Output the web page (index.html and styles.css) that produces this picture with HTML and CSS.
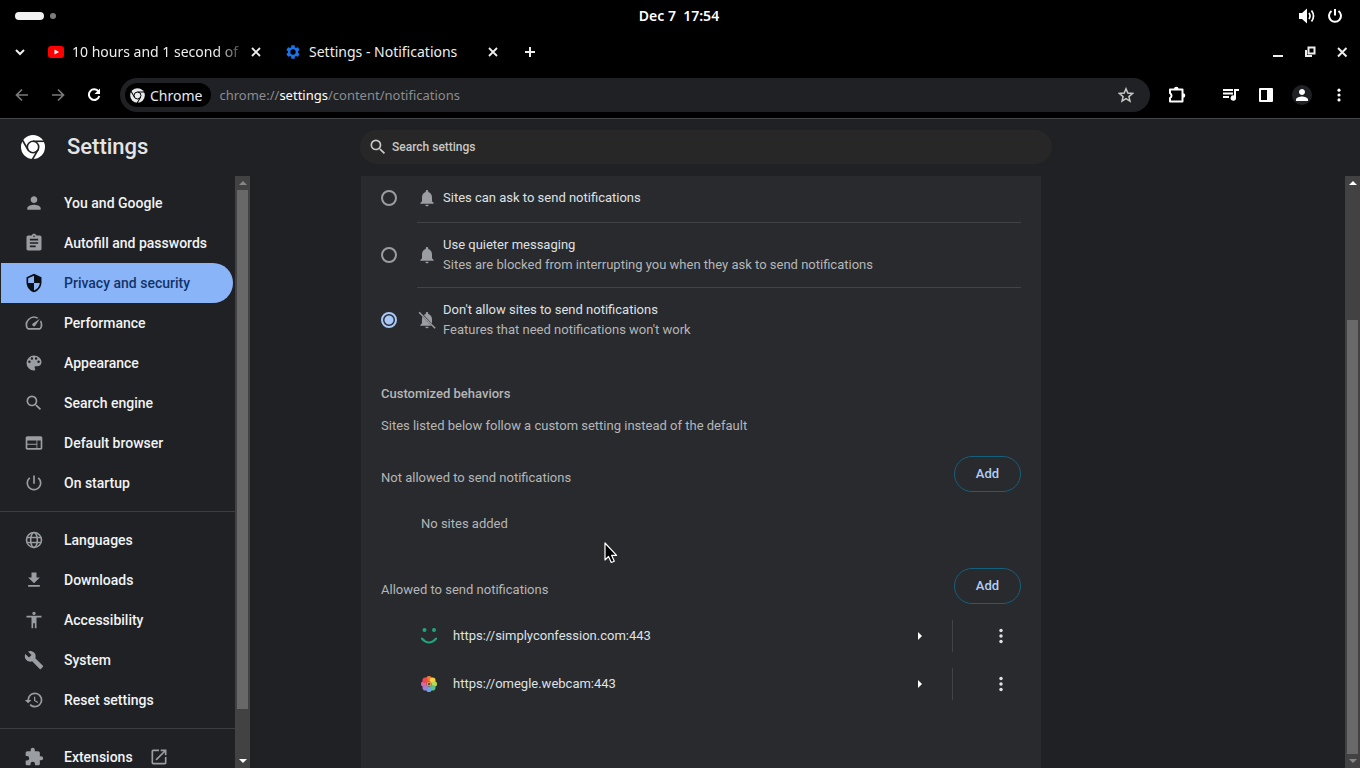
FILE: index.html
```
<!DOCTYPE html>
<html lang="en">
<head>
  <meta charset="UTF-8">
  <meta name="viewport" content="width=device-width, initial-scale=1.0">
  <title>Settings - Notifications</title>
  <link rel="stylesheet" href="styles.css">
</head>
<body>
  <!-- Icon set -->
  <svg class="sprite" aria-hidden="true">
    <mask id="chrome-gaps">
      <rect width="24" height="24" fill="#fff"/>
      <g fill="none" stroke="#000" stroke-width="1.4">
        <circle cx="12" cy="12" r="4.900"/>
        <path d="M12 7.100h11"/>
        <path d="M12 7.100h11" transform="rotate(120 12 12)"/>
        <path d="M12 7.100h11" transform="rotate(240 12 12)"/>
      </g>
    </mask>
    <symbol id="chrome" viewBox="0 0 24 24"><circle cx="12" cy="12" r="10.300" mask="url(#chrome-gaps)"/></symbol>
    <symbol id="close" viewBox="0 0 16 16"><path d="M4 4l8 8M12 4l-8 8" fill="none" stroke="currentColor" stroke-width="1.800"/></symbol>
    <symbol id="search" viewBox="0 0 24 24"><path d="M15.500 14h-.79l-.28-.27A6.470 6.470 0 0 0 16 9.500 6.500 6.500 0 1 0 9.500 16c1.610 0 3.090-.59 4.230-1.570l.27.28v.79l5 4.990L20.490 19l-4.990-5zm-6 0C7.010 14 5 11.990 5 9.500S7.010 5 9.500 5 14 7.010 14 9.500 11.990 14 9.500 14z"/></symbol>
    <symbol id="person" viewBox="0 0 24 24"><path d="M12 12c2.210 0 4-1.790 4-4s-1.790-4-4-4-4 1.790-4 4 1.790 4 4 4zm0 2c-2.670 0-8 1.340-8 4v2h16v-2c0-2.660-5.330-4-8-4z"/></symbol>
    <symbol id="clipboard" viewBox="0 0 24 24"><path d="M19 3h-4.180C14.400 1.840 13.300 1 12 1s-2.400.84-2.820 2H5c-1.100 0-2 .9-2 2v14c0 1.100.9 2 2 2h14c1.100 0 2-.9 2-2V5c0-1.100-.9-2-2-2zm-7 0c.55 0 1 .45 1 1s-.45 1-1 1-1-.45-1-1 .45-1 1-1zm2 14H7v-2h7v2zm3-4H7v-2h10v2zm0-4H7V7h10v2z"/></symbol>
    <symbol id="shield" viewBox="0 0 24 24"><path d="M12 1L3 5v6c0 5.550 3.840 10.740 9 12 5.160-1.260 9-6.450 9-12V5l-9-4zm0 10.990h7c-.53 4.120-3.280 7.790-7 8.940V12H5V6.300l7-3.110v8.800z"/></symbol>
    <symbol id="speed" viewBox="0 0 24 24"><path d="M20.380 8.570l-1.230 1.850a8 8 0 0 1-.22 7.580H5.070A8 8 0 0 1 15.580 6.850l1.850-1.230A10 10 0 0 0 3.350 19a2 2 0 0 0 1.720 1h13.850a2 2 0 0 0 1.740-1 10 10 0 0 0-.27-10.440zm-9.790 6.840a2 2 0 0 0 2.830 0l5.660-8.490-8.490 5.660a2 2 0 0 0 0 2.830z"/></symbol>
    <symbol id="palette" viewBox="0 0 24 24"><path d="M12 3a9 9 0 0 0 0 18c.83 0 1.500-.67 1.500-1.500 0-.39-.15-.74-.39-1.010-.23-.26-.38-.61-.38-.99 0-.83.67-1.500 1.500-1.500H16c2.760 0 5-2.240 5-5 0-4.420-4.030-8-9-8zm-5.500 9a1.500 1.500 0 1 1 0-3 1.500 1.500 0 0 1 0 3zm3-4a1.500 1.500 0 1 1 0-3 1.500 1.500 0 0 1 0 3zm5 0a1.500 1.500 0 1 1 0-3 1.500 1.500 0 0 1 0 3zm3 4a1.500 1.500 0 1 1 0-3 1.500 1.500 0 0 1 0 3z"/></symbol>
    <symbol id="browser" viewBox="0 0 24 24"><path d="M20 4H4c-1.100 0-2 .9-2 2v12c0 1.100.9 2 2 2h16c1.100 0 2-.9 2-2V6c0-1.100-.9-2-2-2zm-5 14H4v-4h11v4zm0-5H4V9h11v4zm5 5h-4V9h4v9z"/></symbol>
    <symbol id="power" viewBox="0 0 24 24"><path d="M13 3h-2v10h2V3zm4.830 2.170l-1.420 1.420A6.920 6.920 0 0 1 19 12a7 7 0 1 1-11.410-5.420L6.170 5.170A9 9 0 1 0 21 12a8.940 8.940 0 0 0-3.170-6.830z"/></symbol>
    <symbol id="globe" viewBox="0 0 24 24"><g fill="none" stroke="currentColor" stroke-width="1.900"><circle cx="12" cy="12" r="9"/><ellipse cx="12" cy="12" rx="4" ry="9"/><path d="M4 9h16M4 15h16"/></g></symbol>
    <symbol id="download" viewBox="0 0 24 24"><path d="M19 9h-4V3H9v6H5l7 7 7-7zM5 18v2h14v-2H5z"/></symbol>
    <symbol id="accessibility" viewBox="0 0 24 24"><path d="M12 2c1.100 0 2 .9 2 2s-.9 2-2 2-2-.9-2-2 .9-2 2-2zm9 7h-6v13h-2v-6h-2v6H9V9H3V7h18v2z"/></symbol>
    <symbol id="wrench" viewBox="0 0 24 24"><path d="M22.700 19l-9.100-9.100c.9-2.300.4-5-1.500-6.900-2-2-5-2.400-7.400-1.300L9 6 6 9 1.600 4.700C.4 7.100.9 10.100 2.900 12.100c1.900 1.900 4.600 2.400 6.900 1.500l9.100 9.100c.4.4 1 .4 1.400 0l2.300-2.300c.5-.4.5-1.100.1-1.400z"/></symbol>
    <symbol id="restore" viewBox="0 0 24 24"><path d="M13 3a9 9 0 0 0-9 9H1l3.890 3.890.07.14L9 12H6a7 7 0 1 1 2.060 4.940l-1.420 1.420A9 9 0 1 0 13 3zm-1 5v5l4.280 2.540.72-1.210-3.500-2.080V8H12z"/></symbol>
    <symbol id="extension" viewBox="0 0 24 24"><path d="M20.500 11H19V7c0-1.100-.9-2-2-2h-4V3.500a2.500 2.500 0 0 0-5 0V5H4c-1.100 0-2 .9-2 2v3.800h1.500a2.700 2.700 0 0 1 0 5.400H2V20c0 1.100.9 2 2 2h3.800v-1.500a2.700 2.700 0 0 1 5.400 0V22H17c1.100 0 2-.9 2-2v-4h1.500a2.500 2.500 0 0 0 0-5z"/></symbol>
    <symbol id="external" viewBox="0 0 24 24"><path d="M19 19H5V5h7V3H5a2 2 0 0 0-2 2v14a2 2 0 0 0 2 2h14c1.100 0 2-.9 2-2v-7h-2v7zM14 3v2h3.590l-9.830 9.830 1.410 1.410L19 6.410V10h2V3h-7z"/></symbol>
    <symbol id="bell" viewBox="0 0 24 24"><path d="M12 22c1.100 0 2-.9 2-2h-4a2 2 0 0 0 2 2zm6-6v-5c0-3.070-1.640-5.640-4.500-6.320V4a1.500 1.500 0 0 0-3 0v.68C7.630 5.360 6 7.920 6 11v5l-2 2v1h16v-1l-2-2z"/></symbol>
    <symbol id="bell-off" viewBox="0 0 24 24"><path d="M12 22a2 2 0 0 0 2-2h-4a2 2 0 0 0 2 2zM6.600 8.200A7.200 7.200 0 0 0 6 11v5l-2 2v1h13.400zM18 16.300V11c0-3.080-1.640-5.640-4.500-6.320V4a1.500 1.500 0 0 0-3 0v.68c-.9.220-1.700.62-2.350 1.170z"/><path d="M2.500 2.700L21.800 22" stroke="currentColor" stroke-width="1.800"/></symbol>
    <symbol id="dots" viewBox="0 0 24 24"><circle cx="12" cy="5.500" r="2.100"/><circle cx="12" cy="12" r="2.100"/><circle cx="12" cy="18.500" r="2.100"/></symbol>
  </svg>

  <header class="desktop-bar">
    <div class="workspaces"><span class="workspace current"></span><span class="workspace"></span></div>
    <time class="clock">Dec 7&nbsp; 17:54</time>
    <div class="status">
      <svg width="18" height="18" viewBox="0 0 18 18"><path d="M1 6h3l5-4.500v15L4 12H1z"/><path d="M11 6q2 3 0 6M13.500 3.500q4 5.500 0 11" fill="none" stroke="currentColor" stroke-width="1.700"/></svg>
      <svg width="16" height="16" viewBox="0 0 16 16"><path d="M4.500 3a6 6 0 1 0 7 0M8 1v6.500" fill="none" stroke="currentColor" stroke-width="2"/></svg>
    </div>
  </header>

  <div class="tab-strip">
    <button class="icon-button tab-search" aria-label="Search tabs"><svg width="16" height="16" viewBox="0 0 16 16"><path d="M4 6l4 4 4-4" fill="none" stroke="currentColor" stroke-width="2"/></svg></button>
    <div class="tab">
      <svg width="16" height="16" viewBox="0 0 16 16"><rect y="2" width="16" height="12" rx="3" fill="#f00"/><path d="M6.500 5.500v5L11 8z" fill="#fff"/></svg>
      <span class="tab-title faded">10 hours and 1 second of</span>
      <button class="icon-button" aria-label="Close tab"><svg width="16" height="16"><use href="#close"/></svg></button>
    </div>
    <div class="tab">
      <svg class="gear" width="16" height="16" viewBox="0 0 24 24"><path d="M19.430 12.980c.04-.32.07-.64.07-.98s-.03-.66-.07-.98l2.110-1.650c.19-.15.24-.42.12-.64l-2-3.460c-.12-.22-.39-.3-.61-.22l-2.490 1c-.52-.4-1.080-.73-1.690-.98l-.38-2.650A.49.49 0 0 0 14 2h-4c-.25 0-.46.18-.49.42l-.38 2.650c-.61.25-1.170.59-1.690.98l-2.490-1c-.23-.09-.49 0-.61.22l-2 3.460c-.13.22-.07.49.12.64l2.110 1.650c-.04.32-.07.65-.07.980s.03.66.07.980l-2.110 1.650c-.19.15-.24.42-.12.640l2 3.460c.12.22.39.3.61.22l2.490-1c.52.4 1.080.73 1.690.98l.38 2.650c.03.24.24.42.49.42h4c.25 0 .46-.18.49-.42l.38-2.650c.61-.25 1.170-.59 1.690-.98l2.490 1c.23.09.49 0 .61-.22l2-3.460c.12-.22.07-.49-.12-.64l-2.110-1.650zM12 16a4 4 0 1 1 0-8 4 4 0 0 1 0 8z"/></svg>
      <span class="tab-title">Settings - Notifications</span>
      <button class="icon-button" aria-label="Close tab"><svg width="16" height="16"><use href="#close"/></svg></button>
    </div>
    <button class="icon-button" aria-label="New tab"><svg width="16" height="16" viewBox="0 0 16 16"><path d="M8 3v10M3 8h10" fill="none" stroke="currentColor" stroke-width="2"/></svg></button>
    <div class="window-buttons">
      <button class="icon-button" aria-label="Minimize"><svg width="16" height="16"><path d="M3 11h10v2H3z"/></svg></button>
      <button class="icon-button" aria-label="Restore"><svg width="16" height="16" viewBox="0 0 16 16"><path d="M6.500 3.500h6v6h-6zM4 6v6h6" fill="none" stroke="currentColor" stroke-width="2"/></svg></button>
      <button class="icon-button" aria-label="Close window"><svg width="16" height="16" viewBox="0 0 16 16"><path d="M4 4l8.500 8.500M12.500 4L4 12.500" fill="none" stroke="currentColor" stroke-width="2"/></svg></button>
    </div>
  </div>

  <div class="toolbar">
    <div class="nav-buttons">
      <button class="icon-button dim" aria-label="Back"><svg width="16" height="16" viewBox="0 0 16 16"><path d="M14 8H3M8 2.500L2.500 8 8 13.500" fill="none" stroke="currentColor" stroke-width="1.700"/></svg></button>
      <button class="icon-button dim" aria-label="Forward"><svg width="16" height="16" viewBox="0 0 16 16"><path d="M2 8h11M8 2.500L13.500 8 8 13.500" fill="none" stroke="currentColor" stroke-width="1.700"/></svg></button>
      <button class="icon-button" aria-label="Reload"><svg width="16" height="16" viewBox="0 0 16 16"><path d="M12.500 4.500A5.300 5.300 0 1 0 13.300 9" fill="none" stroke="currentColor" stroke-width="2"/><path d="M14 1.500V7H8.500z"/></svg></button>
    </div>
    <div class="address-bar">
      <span class="origin-chip"><svg width="17" height="17"><use href="#chrome"/></svg>Chrome</span>
      <span class="url">chrome://<b>settings</b>/content/notifications</span>
      <button class="icon-button star" aria-label="Bookmark this tab"><svg width="16" height="16" viewBox="0 0 16 16"><path d="M8 1.800l1.800 4.300 4.700.4-3.600 3.100 1.100 4.600L8 11.700l-4 2.500 1.100-4.600-3.600-3.100 4.700-.4z" fill="none" stroke="currentColor" stroke-width="1.500"/></svg></button>
    </div>
    <div class="toolbar-actions">
      <button class="icon-button extensions" aria-label="Extensions"><svg width="18" height="18" viewBox="0 0 18 18"><path d="M2 3.500h12.500v12H2V12q3-2 0-5z" fill="none" stroke="currentColor" stroke-width="2" stroke-linejoin="round"/><path d="M6 3a2.300 2.300 0 0 1 4.600 0zM15 7.200a2.300 2.300 0 0 1 0 4.600z"/></svg></button>
      <button class="icon-button" aria-label="Media controls"><svg width="18" height="18" viewBox="0 0 18 18"><path d="M1 3h10v2H1zM1 6.500h10v2H1zM1 10h6v2H1zM12 3h5v2h-3v7a2.700 2.700 0 1 1-2-2.600z"/></svg></button>
      <button class="icon-button" aria-label="Side panel"><svg width="16" height="16" viewBox="0 0 16 16"><path d="M2 1h12a1 1 0 0 1 1 1v12a1 1 0 0 1-1 1H2a1 1 0 0 1-1-1V2a1 1 0 0 1 1-1zm1 2v10h6V3z" fill-rule="evenodd"/></svg></button>
      <button class="icon-button profile" aria-label="Profile"><svg width="18" height="18"><use href="#person"/></svg></button>
      <button class="icon-button" aria-label="Menu"><svg width="18" height="18"><use href="#dots"/></svg></button>
    </div>
  </div>

  <div class="settings-header">
    <svg class="logo" width="28" height="28"><use href="#chrome"/></svg>
    <h1>Settings</h1>
    <label class="search-box">
      <svg width="20" height="20"><use href="#search"/></svg>
      <input type="search" placeholder="Search settings" aria-label="Search settings">
    </label>
  </div>

  <div class="settings-body">
    <nav class="sidebar">
      <a href="#people"><svg><use href="#person"/></svg>You and Google</a>
      <a href="#autofill"><svg><use href="#clipboard"/></svg>Autofill and passwords</a>
      <a href="#privacy" class="selected"><svg><use href="#shield"/></svg>Privacy and security</a>
      <a href="#performance"><svg><use href="#speed"/></svg>Performance</a>
      <a href="#appearance"><svg><use href="#palette"/></svg>Appearance</a>
      <a href="#engine"><svg><use href="#search"/></svg>Search engine</a>
      <a href="#default"><svg><use href="#browser"/></svg>Default browser</a>
      <a href="#startup"><svg><use href="#power"/></svg>On startup</a>
      <hr>
      <a href="#languages"><svg><use href="#globe"/></svg>Languages</a>
      <a href="#downloads"><svg><use href="#download"/></svg>Downloads</a>
      <a href="#a11y"><svg><use href="#accessibility"/></svg>Accessibility</a>
      <a href="#system"><svg><use href="#wrench"/></svg>System</a>
      <a href="#reset"><svg><use href="#restore"/></svg>Reset settings</a>
      <hr>
      <a href="#extensions"><svg><use href="#extension"/></svg>Extensions<svg class="launch"><use href="#external"/></svg></a>
    </nav>
    <div class="scrollbar sidebar-scroll" aria-hidden="true">
      <span class="arrow up off"></span><span class="track"><span class="thumb"></span></span><span class="arrow down"></span>
    </div>

    <main class="content">
      <section class="card">
        <div class="option first">
          <input type="radio" name="notifications" id="ask">
          <label for="ask"><svg><use href="#bell"/></svg><span>Sites can ask to send notifications</span></label>
        </div>
        <div class="option">
          <input type="radio" name="notifications" id="quiet">
          <label for="quiet"><svg><use href="#bell"/></svg><span>Use quieter messaging<small>Sites are blocked from interrupting you when they ask to send notifications</small></span></label>
        </div>
        <div class="option">
          <input type="radio" name="notifications" id="block" checked>
          <label for="block"><svg><use href="#bell-off"/></svg><span>Don't allow sites to send notifications<small>Features that need notifications won't work</small></span></label>
        </div>

        <h2>Customized behaviors</h2>
        <p class="description">Sites listed below follow a custom setting instead of the default</p>

        <div class="list-header">
          <h3>Not allowed to send notifications</h3>
          <button class="add-button">Add</button>
        </div>
        <p class="empty">No sites added</p>

        <div class="list-header">
          <h3>Allowed to send notifications</h3>
          <button class="add-button">Add</button>
        </div>
        <ul class="sites">
          <li>
            <svg width="16" height="16" viewBox="0 0 16 16"><g fill="#1fa67a"><circle cx="3.500" cy="2" r="2"/><circle cx="13" cy="2" r="2"/></g><path d="M.8 10.500q7.200 8 14.400 0" fill="none" stroke="#1fa67a" stroke-width="2" stroke-linecap="round"/></svg>
            <span class="site">https://simplyconfession.com:443</span>
            <button class="icon-button details" aria-label="Site details"><i class="caret"></i></button>
            <button class="icon-button more" aria-label="More actions"><svg width="20" height="20"><use href="#dots"/></svg></button>
          </li>
          <li>
            <svg width="16" height="16" viewBox="0 0 16 16"><circle cx="8" cy="2.800" r="2.800" fill="#f47b30"/><circle cx="11.700" cy="4.300" r="2.800" fill="#f7cf45"/><circle cx="13.200" cy="8" r="2.800" fill="#b6d957"/><circle cx="11.700" cy="11.700" r="2.800" fill="#5cc08a"/><circle cx="8" cy="13.200" r="2.800" fill="#6aa5df"/><circle cx="4.300" cy="11.700" r="2.800" fill="#9a83d2"/><circle cx="2.800" cy="8" r="2.800" fill="#d866ae"/><circle cx="4.300" cy="4.300" r="2.800" fill="#ef4b52"/><circle cx="8" cy="8" r="2.500" fill="#df9550"/><circle cx="8" cy="8" r="1" fill="#333"/></svg>
            <span class="site">https://omegle.webcam:443</span>
            <button class="icon-button details" aria-label="Site details"><i class="caret"></i></button>
            <button class="icon-button more" aria-label="More actions"><svg width="20" height="20"><use href="#dots"/></svg></button>
          </li>
        </ul>
      </section>
    </main>
    <div class="scrollbar page-scroll" aria-hidden="true">
      <span class="arrow up"></span><span class="track"><span class="thumb"></span></span><span class="arrow down off"></span>
    </div>
  </div>

  <svg class="pointer" width="14" height="22" viewBox="0 0 14 22" aria-hidden="true"><path d="M1 1v17l3.500-3.500 2.800 6 3-1.200-2.700-6h5z" fill="#000" stroke="#fff" stroke-width="1.200" stroke-linejoin="round"/></svg>
</body>
</html>
```
FILE: styles.css
```
* {
  box-sizing: border-box;
}

body {
  display: flex;
  flex-direction: column;
  height: 100vh;
  margin: 0;
  overflow: hidden;
  background-color: #000;
  color: #fff;
  font-family: Roboto, "Liberation Sans", sans-serif;
  font-size: 13px;
}

svg {
  display: block;
  flex: none;
  fill: currentColor;
}

button {
  font-family: inherit;
  cursor: pointer;
}

.sprite {
  position: absolute;
  width: 0;
  height: 0;
}

.icon-button {
  display: flex;
  align-items: center;
  justify-content: center;
  flex: none;
  padding: 0;
  border: 0;
  background: none;
  color: inherit;
}

/* Desktop top bar */
.desktop-bar {
  display: grid;
  grid-template-columns: 1fr auto 1fr;
  align-items: center;
  height: 32px;
  padding: 0 17px 1px 15px;
  font-family: "Noto Sans", sans-serif;
}

.workspaces {
  display: flex;
  align-items: center;
  gap: 6px;
}

.workspace {
  width: 6px;
  height: 6px;
  border-radius: 4px;
  background-color: #7c7c7c;
}

.workspace.current {
  width: 29px;
  height: 8px;
  background-color: #f2f2f2;
}

.clock {
  font-size: 14px;
  font-weight: 600;
}

.status {
  display: flex;
  align-items: center;
  justify-content: flex-end;
  gap: 11px;
}

/* Tabs */
.tab-strip {
  display: flex;
  align-items: center;
  height: 40px;
  padding: 0 10px 1px 12px;
  color: #eee;
  font-family: "Noto Sans", sans-serif;
  font-size: 14px;
}

.tab-search {
  margin-right: 20px;
}

.tab {
  display: flex;
  align-items: center;
  width: 237px;
  padding-right: 21px;
}

.tab-title {
  flex: 1;
  margin-left: 8px;
  white-space: nowrap;
}

.tab-title.faded {
  -webkit-mask-image: linear-gradient(to right, #000 82%, transparent);
  mask-image: linear-gradient(to right, #000 82%, transparent);
}

.gear {
  color: #1a73e8;
}

.window-buttons {
  display: flex;
  gap: 16px;
  margin-left: auto;
}

/* Toolbar */
.toolbar {
  display: flex;
  align-items: center;
  height: 47px;
  padding: 0 12px 0 14px;
  border-bottom: 1px solid #46474a;
  font-family: "Noto Sans", sans-serif;
  font-size: 14px;
}

.nav-buttons {
  display: flex;
  gap: 20px;
  margin-right: 18px;
}

.dim {
  color: #7a7a7a;
}

.address-bar {
  display: flex;
  align-items: center;
  flex: 1;
  gap: 8px;
  height: 34px;
  padding: 0 16px 0 5px;
  border-radius: 17px;
  background-color: #202124;
}

.origin-chip {
  display: flex;
  align-items: center;
  gap: 4px;
  height: 24px;
  padding: 0 9px 0 4px;
  border-radius: 12px;
  background-color: #000;
  color: #e8eaed;
}

.url {
  flex: 1;
  color: #8a8c8f;
  font-size: 13px;
}

.url b {
  color: #fff;
  font-weight: normal;
}

.star {
  color: #c6c6c6;
}

.toolbar-actions {
  display: flex;
  align-items: center;
  gap: 18px;
  margin-left: 18px;
}

.extensions {
  margin-right: 18px;
}

.profile {
  width: 20px;
  height: 20px;
  border-radius: 50%;
  background-color: #202124;
}

/* Settings header */
.settings-header {
  display: flex;
  align-items: center;
  height: 57px;
  padding: 0 0 2px 19px;
  background-color: #202124;
}

.settings-header h1 {
  width: 293px;
  margin: 0 0 0 20px;
  color: #e3e4e6;
  font-size: 22px;
  font-weight: 500;
}

.search-box {
  display: flex;
  align-items: center;
  gap: 4px;
  width: 692px;
  height: 34px;
  padding: 0 8px;
  border-radius: 17px;
  background-color: #272727;
  color: #c7c7c7;
}

.search-box input {
  flex: 1;
  padding: 0;
  border: 0;
  outline: 0;
  background: none;
  color: inherit;
  font-family: inherit;
  font-size: 12px;
  font-weight: 500;
}

.search-box input::placeholder {
  color: #c7c7c7;
}

/* Settings body */
.settings-body {
  display: flex;
  flex: 1;
  min-height: 0;
  background-color: #202124;
}

.sidebar {
  flex: none;
  width: 235px;
  padding-top: 7px;
  overflow: hidden;
}

.sidebar a {
  display: flex;
  align-items: center;
  gap: 20px;
  height: 40px;
  margin: 0 2px 0 1px;
  padding-left: 23px;
  border-radius: 0 20px 20px 0;
  color: #f1f3f4;
  font-size: 14px;
  font-weight: 500;
  text-decoration: none;
}

.sidebar svg {
  width: 20px;
  height: 20px;
  color: #9a9da1;
}

.sidebar .selected {
  background-color: #8ab4f8;
  color: #123469;
}

.sidebar .selected svg {
  color: #0b0f16;
}

.sidebar .launch {
  margin-left: -4px;
}

.sidebar hr {
  margin: 8px 0;
  border: 0;
  border-top: 1px solid #3c3d40;
}

/* Scrollbars */
.scrollbar {
  display: flex;
  flex-direction: column;
  flex: none;
  width: 15px;
  background-color: #424242;
}

.arrow {
  display: flex;
  align-items: center;
  justify-content: center;
  height: 14px;
}

.arrow::before {
  content: "";
  border: 4px solid transparent;
}

.up::before {
  border-top: 0;
  border-bottom-color: #fff;
}

.down::before {
  border-bottom: 0;
  border-top-color: #fff;
}

.up.off::before {
  border-bottom-color: #868686;
}

.down.off::before {
  border-top-color: #868686;
}

.track {
  display: flex;
  flex-direction: column;
  flex: 1;
  padding: 0 2px;
}

.thumb {
  background-color: #686868;
}

.sidebar-scroll .thumb {
  height: 92%;
}

.page-scroll .thumb {
  height: 77%;
  margin-top: auto;
}

/* Content card */
.content {
  flex: 1;
  padding-left: 111px;
  overflow: hidden;
}

.card {
  max-width: 680px;
  min-height: 100%;
  padding: 0 20px;
  background-color: #292a2d;
  color: #b4b6b8;
}

.option {
  display: flex;
  align-items: center;
  gap: 20px;
}

.option.first {
  padding-bottom: 2px;
}

.option label {
  display: flex;
  align-items: center;
  flex: 1;
  gap: 6px;
  height: 65px;
  border-top: 1px solid #424346;
  color: #dfe1e5;
  line-height: 20px;
}

.option.first label {
  height: 44px;
  border-top: 0;
}

.option svg {
  width: 20px;
  height: 20px;
  color: #9a9da1;
}

.option small {
  display: block;
  color: #b4b6b8;
  font-size: 13px;
}

.option input {
  width: 16px;
  height: 16px;
  margin: 0;
  border: 2px solid #9a9da1;
  border-radius: 50%;
  appearance: none;
}

.option input:checked {
  border-color: #a8c7fa;
  background: radial-gradient(circle, #a8c7fa 4px, transparent 5px);
}

.card h2,
.card h3,
.card p {
  margin: 0;
  font-size: 13px;
  line-height: 20px;
}

.card h2 {
  padding-top: 32px;
  font-weight: 500;
}

.card h3 {
  padding-top: 8px;
  font-weight: 400;
}

.card .description {
  padding: 12px 0 20px;
}

.list-header {
  display: flex;
  align-items: center;
  justify-content: space-between;
  height: 36px;
}

.add-button {
  width: 67px;
  height: 36px;
  padding: 0 0 2px;
  border: 1px solid #15607c;
  border-radius: 18px;
  background: none;
  color: #b3cdf5;
  font-size: 13px;
  font-weight: 500;
}

.card .empty {
  padding: 22px 0 34px 40px;
}

.sites {
  margin: 0;
  padding: 8px 0 0 40px;
  list-style: none;
}

.sites li {
  display: flex;
  align-items: center;
  height: 48px;
  color: #dfe1e5;
}

.site {
  flex: 1;
  margin-left: 16px;
  padding-bottom: 1px;
}

.details {
  width: 36px;
  height: 36px;
  margin-right: 14px;
}

.caret {
  border: 4px solid transparent;
  border-left-color: #fff;
  border-right: 0;
}

.more {
  width: 69px;
  height: 32px;
  padding-left: 28px;
  border-left: 1px solid #424346;
}

.pointer {
  position: absolute;
  top: 542px;
  left: 604px;
}
```
